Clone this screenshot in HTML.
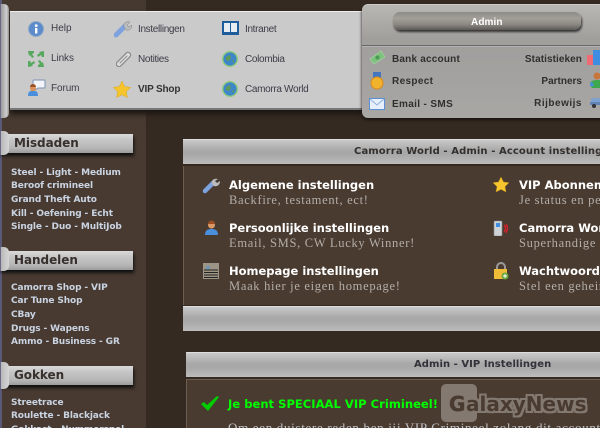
<!DOCTYPE html>
<html><head><meta charset="utf-8">
<style>
html,body{margin:0;padding:0;background:#352a22}
#p{position:relative;width:600px;height:428px;overflow:hidden;background:#352a22;font-family:"DejaVu Sans","Liberation Sans",sans-serif}
#p div,#p span,#p svg{position:absolute}
.t{white-space:nowrap}
.m{font:10px "Liberation Sans",sans-serif;color:#3c3c48;letter-spacing:-.33px;line-height:12px}
.mb{font:bold 10px "Liberation Sans",sans-serif;color:#333;letter-spacing:.2px;line-height:12px}
.n{font:bold 9px "DejaVu Sans",sans-serif;color:#c9d3e2;letter-spacing:-.12px;line-height:12px;left:11px;white-space:nowrap}
.hd{left:0;width:133px;height:19px;background:linear-gradient(#dadada,#c6c6c6 30%,#b6b6b6 75%,#9c9c9c);box-shadow:1px 3px 3px #111}
.hd b{position:absolute;left:14px;top:2px;font:bold 12px "DejaVu Sans",sans-serif;color:#37302c;white-space:nowrap;letter-spacing:-.05px}
.tab{left:0;width:9px;height:22px;background:linear-gradient(90deg,#b9b9b9,#d6d6d6);border-radius:0 5px 5px 0;border-left:1px solid #6a6a88;box-sizing:border-box}
.bar{background:linear-gradient(#c8c8c8,#a8a8a8 45%,#a8a8a8 60%,#bcbcbc);border-top:1px solid #ddd;box-sizing:border-box}
.h1{font:bold 11.5px "DejaVu Sans",sans-serif;color:#fff;white-space:nowrap;line-height:14px}
.h2{font:12.5px "Liberation Serif",serif;color:#b3aea8;white-space:nowrap;letter-spacing:.7px;line-height:14px}
</style></head><body><div id="p">
<div style="left:0;top:0;width:146px;height:428px;background:#453930"></div>
<div style="left:0;top:118px;width:146px;height:310px;background:#483a30"></div>
<div style="left:0;top:0;width:2px;height:428px;background:#5a5a78"></div>
<div style="left:146px;top:0;width:454px;height:428px;background:#352a22"></div>

<!-- left tab + menu -->
<div style="left:10px;top:11px;width:354px;height:99px;background:#cacaca;border-top:1px solid #eee;border-bottom:2px solid #777;box-sizing:border-box;box-shadow:0 4px 5px #1c1510"></div>
<div style="left:0;top:4px;width:9px;height:114px;background:linear-gradient(90deg,#9a9a9a,#cfcfcf 70%,#8d8d8d);border-radius:0 5px 5px 0;border-left:1px solid #6a6a88;box-sizing:border-box"></div>

<!-- top-left icons -->
<svg style="left:27px;top:20px" width="18" height="18"><circle cx="9" cy="9" r="7.5" fill="#5c8ccc" stroke="#93a9c4"/><rect x="8" y="8" width="2.4" height="5.5" fill="#fff"/><circle cx="9.2" cy="5.6" r="1.4" fill="#fff"/></svg>
<svg style="left:27px;top:50px" width="18" height="18" fill="#55a85c"><path d="M1 1h6v2L5 4l2 3-2 1-2-3-1 1zM17 1v6h-2l-1-2-3 2-1-2 3-2-1-1zM1 17v-6h2l1 2 3-2 1 2-3 2 1 1zM17 17h-6v-2l2-1-2-3 2-1 2 3 1-1z"/></svg>
<svg style="left:26px;top:79px" width="20" height="18"><path d="M8 1h10a1 1 0 0 1 1 1v6a1 1 0 0 1-1 1h-6l-3 2V9H8a1 1 0 0 1-1-1V2a1 1 0 0 1 1-1z" fill="#f2f4f8" stroke="#7d93b5"/><circle cx="7" cy="9.5" r="3" fill="#d9935e"/><path d="M4 8a3 3 0 0 1 6 0z" fill="#9c4f22"/><path d="M2 17c0-5 2-5 5-5s5 0 5 5z" fill="#4a8fdc"/></svg>
<svg style="left:114px;top:20px" width="18" height="18"><path d="M2 15L11 6" stroke="#7ea2de" stroke-width="5" stroke-linecap="round"/><path d="M10 7c-1-4 2-6 6-5l-3 3 2 2 3-2c0 4-3 6-6 5z" fill="#b9bbbd" stroke="#808080" stroke-width=".5"/></svg>
<svg style="left:116px;top:51px" width="16" height="16"><path d="M3 13L12 4" stroke="#8a8a8a" stroke-width="6.500" stroke-linecap="round"/><path d="M3 13L12 4" stroke="#dcdcdc" stroke-width="4" stroke-linecap="round"/><path d="M4 12L11 5" stroke="#8f8f8f" stroke-width="1" stroke-linecap="round"/></svg>
<svg style="left:113px;top:81px" width="18" height="17"><path d="M9 0l2.7 5.6 6 .8-4.4 4.2 1.1 6L9 13.700l-5.400 2.900 1.100-6L.3 6.400l6-.8z" fill="#f6c52d" stroke="#d9a520" stroke-width=".5"/></svg>
<svg style="left:222px;top:21px" width="17" height="14"><rect width="17" height="14" fill="#1f5c9c"/><rect x="2" y="2" width="6" height="9" fill="#e8edf2"/><rect x="9" y="2" width="6" height="9" fill="#e8edf2"/></svg>
<svg style="left:222px;top:51px" width="16" height="16"><circle cx="8" cy="8" r="7.300" fill="#3f86c8" stroke="#8fcb7a" stroke-width="1.400"/><path d="M4 6l4-2 1 3-2 3-3-1zM10 10l2-1 0 3z" fill="#5d9a58"/></svg>
<svg style="left:222px;top:81px" width="16" height="16"><circle cx="8" cy="8" r="7.300" fill="#3f86c8" stroke="#8fcb7a" stroke-width="1.400"/><path d="M4 6l4-2 1 3-2 3-3-1zM10 10l2-1 0 3z" fill="#5d9a58"/></svg>

<span class="t m" style="left:51px;top:23px;letter-spacing:0">Help</span>
<span class="t m" style="left:51px;top:53px;letter-spacing:-.1px">Links</span>
<span class="t m" style="left:51px;top:83px;letter-spacing:-.1px">Forum</span>
<span class="t m" style="left:138px;top:24px">Instellingen</span>
<span class="t m" style="left:138px;top:54px">Notities</span>
<span class="t mb" style="left:138px;top:84px;letter-spacing:-.18px">VIP Shop</span>
<span class="t m" style="left:245px;top:24px">Intranet</span>
<span class="t m" style="left:245px;top:54px">Colombia</span>
<span class="t m" style="left:245px;top:84px">Camorra World</span>

<!-- right panel -->
<div style="left:362px;top:4px;width:240px;height:114px;background:linear-gradient(#b9b7b4,#a19f9c 30%,#a4a2a0 65%,#a9a7a4);border-radius:6px 0 0 6px;box-shadow:0 2px 3px #191210;border-top:1px solid #ccc;box-sizing:border-box"></div>
<div style="left:362px;top:45px;width:238px;height:2px;background:linear-gradient(#444,#d8d8d8)"></div>
<div style="left:393px;top:12px;width:188px;height:18px;border-radius:7px;background:linear-gradient(#8d8b86,#a29f99 35%,#8b8882 70%,#5c5a56);box-shadow:1px 2px 2px #333"></div>
<span class="t" style="left:471px;top:17px;font:bold 10px 'Liberation Sans',sans-serif;color:#fff;letter-spacing:.1px">Admin</span>

<svg style="left:369px;top:50px" width="17" height="15"><path d="M1 9L12 1l4 6L5 14z" fill="#7dc17d" stroke="#a7d8a7" stroke-width=".6"/><circle cx="8.500" cy="7.500" r="2" fill="#4a9a55"/></svg>
<svg style="left:370px;top:72px" width="14" height="18"><rect x="3" y="0" width="8" height="6" fill="#4477c0"/><circle cx="7" cy="11" r="6" fill="#f1b32d" stroke="#d98a1f"/></svg>
<svg style="left:369px;top:98px" width="16" height="12"><rect x=".5" y=".5" width="15" height="11" fill="#e6effa" stroke="#5d8fd4"/><path d="M1 1l7 6 7-6" fill="none" stroke="#8fb0de"/></svg>
<span class="t mb" style="left:392px;top:54px;letter-spacing:.2px;color:#2f2f2f">Bank account</span>
<span class="t mb" style="left:392px;top:76px;letter-spacing:.35px;color:#2f2f2f">Respect</span>
<span class="t mb" style="left:392px;top:99px;letter-spacing:.35px;color:#2f2f2f">Email - SMS</span>
<span class="t mb" style="right:18px;top:54px;letter-spacing:.08px;color:#2f2f2f">Statistieken</span>
<span class="t mb" style="right:18px;top:76px;letter-spacing:0;color:#2f2f2f">Partners</span>
<span class="t mb" style="right:18px;top:98px;letter-spacing:.5px;color:#2f2f2f">Rijbewijs</span>
<svg style="left:587px;top:50px" width="13" height="15"><rect x="0" y="5" width="6" height="10" fill="#ef6a72"/><rect x="6" y="0" width="7" height="15" fill="#3f8de0"/></svg>
<svg style="left:590px;top:72px" width="10" height="16"><circle cx="7" cy="4" r="3.500" fill="#c9763d"/><path d="M0 13c0-4 3-5 7-5h3v8H2z" fill="#3ea84f"/><path d="M0 14a2 2 0 0 1 3-3l1 3z" fill="#4a8fdc"/></svg>
<svg style="left:590px;top:97px" width="10" height="12"><rect x="1" y="1" width="9" height="7" rx="1.500" fill="#7ea2cf"/><rect x="0" y="5" width="10" height="3" fill="#5f84b5"/><circle cx="4" cy="9" r="2" fill="#333"/></svg>

<!-- sidebar -->
<div class="hd" style="top:134px"><b>Misdaden</b></div>
<div class="tab" style="top:131px;height:24px"></div>
<span class="n" style="top:167px">Steel - Light - Medium</span>
<span class="n" style="top:180px">Beroof crimineel</span>
<span class="n" style="top:194px">Grand Theft Auto</span>
<span class="n" style="top:208px">Kill - Oefening - Echt</span>
<span class="n" style="top:221px">Single - Duo - MultiJob</span>

<div class="hd" style="top:251px"><b>Handelen</b></div>
<div class="tab" style="top:247px;height:24px"></div>
<span class="n" style="top:282px">Camorra Shop - VIP</span>
<span class="n" style="top:295px">Car Tune Shop</span>
<span class="n" style="top:309px">CBay</span>
<span class="n" style="top:323px">Drugs - Wapens</span>
<span class="n" style="top:336px">Ammo - Business - GR</span>

<div class="hd" style="top:366px"><b>Gokken</b></div>
<div class="tab" style="top:362px;height:27px"></div>
<span class="n" style="top:397px">Streetrace</span>
<span class="n" style="top:410px">Roulette - Blackjack</span>
<span class="n" style="top:424px">Gokkast - Nummerspel</span>

<!-- content box 1 -->
<div class="bar" style="left:183px;top:139px;width:417px;height:25px"></div>
<span class="t" style="left:354px;top:146px;font:bold 10px 'DejaVu Sans',sans-serif;color:#33302e;letter-spacing:.1px">Camorra World - Admin - Account instellingen</span>
<div style="left:183px;top:166px;width:417px;height:139px;background:#4a3b31;border-left:1px solid #6e5e50;box-sizing:border-box"></div>
<div class="bar" style="left:183px;top:306px;width:417px;height:25px"></div>

<svg style="left:202px;top:176px" width="18" height="18"><path d="M3 15L11 7" stroke="#7ea2de" stroke-width="4.500" stroke-linecap="round"/><path d="M10 8c-1-4 2-6 6-5l-3 2 2 2 3-2c0 4-3 6-6 5z" fill="#b9bbbd"/></svg>
<svg style="left:204px;top:220px" width="15" height="16"><circle cx="7.500" cy="5" r="3.500" fill="#dd9a68"/><path d="M4 4a3.500 3.500 0 0 1 7 0z" fill="#9c4f22"/><path d="M1 15c0-5 3-6 6.500-6s6.500 1 6.500 6z" fill="#4a8fdc"/></svg>
<svg style="left:203px;top:263px" width="16" height="16"><rect width="16" height="16" fill="#9c9484"/><rect x="3" y="3" width="4" height="3" fill="#6d94b4"/><path d="M1 7h14M1 9.500h14M1 12h14M1 14.500h14" stroke="#222" stroke-width="1"/></svg>
<span class="h1" style="left:229px;top:178px">Algemene instellingen</span>
<span class="h2" style="left:229px;top:193px">Backfire, testament, ect!</span>
<span class="h1" style="left:229px;top:221px">Persoonlijke instellingen</span>
<span class="h2" style="left:229px;top:236px">Email, SMS, CW Lucky Winner!</span>
<span class="h1" style="left:229px;top:264px">Homepage instellingen</span>
<span class="h2" style="left:229px;top:279px">Maak hier je eigen homepage!</span>

<svg style="left:492px;top:177px" width="18" height="16"><path d="M9 0l2.500 5 5.500.7-4 3.900 1 5.400L9 12.400 4 15l1-5.400-4-3.900L6.500 5z" fill="#f6c52d" stroke="#c8961c" stroke-width=".4"/></svg>
<svg style="left:493px;top:220px" width="16" height="16"><rect x="1" y="1" width="8" height="15" rx="1" fill="#cfd3d8" stroke="#8a8a8a" stroke-width=".6"/><rect x="3" y="3" width="4" height="4" fill="#3f8de0"/><path d="M11 5q3 3 0 7M13 4q3 4 0 9" fill="none" stroke="#e0202a" stroke-width="1.300"/></svg>
<svg style="left:493px;top:262px" width="16" height="18"><path d="M4 8V5a4 4 0 0 1 8 0v3" fill="none" stroke="#9a9a9a" stroke-width="2"/><rect x="1" y="7" width="13" height="10" fill="#f0bc38"/><circle cx="12" cy="14" r="3.500" fill="#6aa83f"/><path d="M10 14h4M12 12v4" stroke="#fff"/></svg>
<span class="h1" style="left:519px;top:178px">VIP Abonnement</span>
<span class="h2" style="left:519px;top:193px">Je status en pe</span>
<span class="h1" style="left:519px;top:221px">Camorra World</span>
<span class="h2" style="left:519px;top:236px">Superhandige</span>
<span class="h1" style="left:519px;top:264px">Wachtwoord</span>
<span class="h2" style="left:519px;top:279px">Stel een geheim</span>

<!-- content box 2 -->
<div class="bar" style="left:186px;top:352px;width:414px;height:25px"></div>
<span class="t" style="left:414px;top:359px;font:bold 10px 'DejaVu Sans',sans-serif;color:#33323a;letter-spacing:.05px">Admin - VIP Instellingen</span>
<div style="left:186px;top:379px;width:414px;height:49px;background:#4a3b31;border-left:1px solid #6e5e50;border-top:1px solid #6e5e50;box-sizing:border-box"></div>
<svg style="left:200px;top:395px" width="20" height="17"><path d="M1 9l3-2 3 3L17 1l2 1L8 16z" fill="#0c0"/></svg>
<span class="t" style="left:228px;top:397px;font:bold 11.500px 'DejaVu Sans',sans-serif;color:#0f0;letter-spacing:.04px">Je bent SPECIAAL VIP Crimineel!</span>
<span class="h2" style="left:228px;top:421px;color:#c4c4c8;font-size:13px;letter-spacing:.68px">Om een duistere reden ben jij VIP Crimineel zolang dit account hebt</span>

<!-- watermark -->
<div style="left:441px;top:384px;width:36px;height:38px;border-radius:5px;background:#837970"></div>
<span class="t" style="left:449px;top:392px;font:bold 20px 'DejaVu Sans',sans-serif;color:#4a3b31;letter-spacing:-.5px;-webkit-text-stroke:.5px #4a3b31">G</span>
<span class="t" style="left:466px;top:392px;font:bold 20px 'DejaVu Sans',sans-serif;color:#4a3b31;letter-spacing:0;text-shadow:2px 0 #837970,-2px 0 #837970,0 2px #837970,0 -2px #837970,2px 2px #837970,-2px -2px #837970,2px -2px #837970,-2px 2px #837970">alaxyNews</span>
</div></body></html>
